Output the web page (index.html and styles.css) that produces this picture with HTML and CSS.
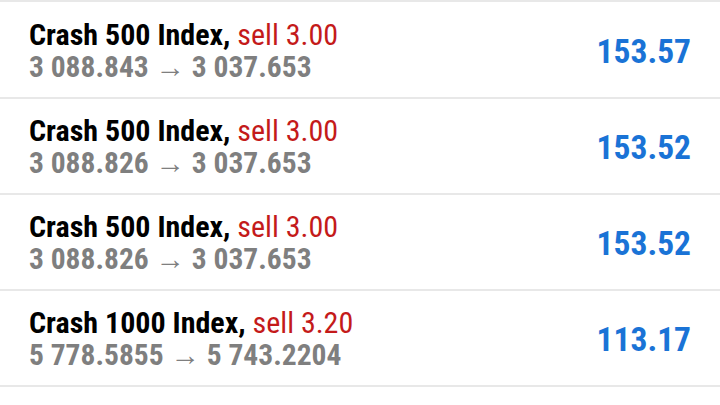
FILE: index.html
```html
<!DOCTYPE html>
<html lang="en">
<head>
    <meta charset="UTF-8">
    <meta name="viewport" content="width=device-width, initial-scale=1.0">
    <title>Deals</title>
    <link rel="stylesheet" href="styles.css">
</head>
<body>
    <div class="deals">
        <!-- one row per closed deal -->
        <div class="deal">
            <div class="info">
                <div class="title">Crash 500 Index, <span class="sell">sell 3.00</span></div>
                <div class="prices">3 088.843 &rarr; 3 037.653</div>
            </div>
            <div class="profit">153.57</div>
        </div>
        <div class="deal">
            <div class="info">
                <div class="title">Crash 500 Index, <span class="sell">sell 3.00</span></div>
                <div class="prices">3 088.826 &rarr; 3 037.653</div>
            </div>
            <div class="profit">153.52</div>
        </div>
        <div class="deal">
            <div class="info">
                <div class="title">Crash 500 Index, <span class="sell">sell 3.00</span></div>
                <div class="prices">3 088.826 &rarr; 3 037.653</div>
            </div>
            <div class="profit">153.52</div>
        </div>
        <div class="deal">
            <div class="info">
                <div class="title">Crash 1000 Index, <span class="sell">sell 3.20</span></div>
                <div class="prices">5 778.5855 &rarr; 5 743.2204</div>
            </div>
            <div class="profit">113.17</div>
        </div>
        <div class="deal">
            <div class="info">
                <div class="title">Crash 1000 Index, <span class="sell">sell 3.20</span></div>
                <div class="prices">5 778.5855 &rarr; 5 743.2204</div>
            </div>
            <div class="profit">113.17</div>
        </div>
    </div>
</body>
</html>
```
FILE: styles.css
```css
/* Basic styling */
body {
    margin: 0;
    padding: 0;
    background-color: #fff;
    font-family: "Roboto", "Liberation Sans", sans-serif;
    font-stretch: condensed;
    font-weight: bold;
    overflow: hidden;
    height: 405px;
}

.deals {
    padding-top: 1px;
    border-top: 2px solid #e8e8e8;
}

.deal {
    display: flex;
    align-items: center;
    justify-content: space-between;
    height: 94px;
    padding: 0 29px;
    border-bottom: 2px solid #e8e8e8;
}

.info {
    padding-top: 1px;
}

.title {
    font-size: 30px;
    line-height: 33px;
    color: #000;
}

.sell {
    font-weight: normal;
    color: #c41a1a;
}

.prices {
    font-size: 29.5px;
    line-height: 33px;
    color: #7f7f7f;
}

.profit {
    padding-top: 2px;
    font-size: 33.5px;
    color: #1a73d6;
}
```
